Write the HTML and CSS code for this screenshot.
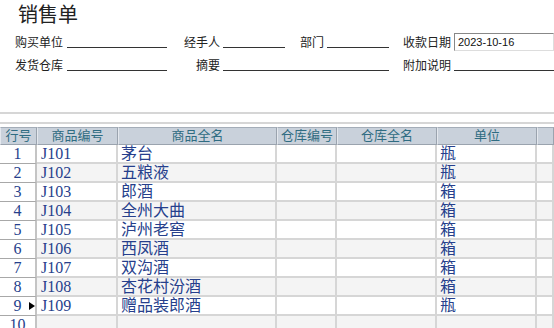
FILE: index.html
```html
<!DOCTYPE html>
<html lang="zh-cn">
<head>
  <meta charset="UTF-8">
  <title>销售单</title>
  <link rel="stylesheet" href="styles.css">
</head>
<body>
  <div id="sheet">
    <div class="title">销售单</div>
    <div class="form">
      <span class="lbl">购买单位</span><span class="line"></span>
      <span class="lbl right">经手人</span><span class="line"></span>
      <span class="lbl right">部门</span><span class="line"></span>
      <span class="lbl wide">收款日期</span><span class="date">2023-10-16</span>

      <span class="lbl">发货仓库</span><span class="line"></span>
      <span class="lbl right">摘要</span><span class="line span3"></span>
      <span class="lbl wide">附加说明</span><span class="line"></span>
    </div>
    <div class="sep"></div>
    <div class="grid" id="grid">
      <div class="row head">
        <div class="cell">行号</div>
        <div class="cell">商品编号</div>
        <div class="cell">商品全名</div>
        <div class="cell">仓库编号</div>
        <div class="cell">仓库全名</div>
        <div class="cell">单位</div>
        <div class="cell"></div>
      </div>
    </div>
  </div>
  <script>
    var items = [
      ['J101', '茅台', '瓶'],
      ['J102', '五粮液', '瓶'],
      ['J103', '郎酒', '箱'],
      ['J104', '全州大曲', '箱'],
      ['J105', '泸州老窖', '箱'],
      ['J106', '西凤酒', '箱'],
      ['J107', '双沟酒', '箱'],
      ['J108', '杏花村汾酒', '箱'],
      ['J109', '赠品装郎酒', '瓶'],
      ['', '', '']
    ];
    var grid = document.getElementById('grid');
    items.forEach(function (it, i) {
      var row = document.createElement('div');
      row.className = 'row' + (i % 2 ? ' even' : '');
      var mark = i === 8 ? '<span class="mark"></span>' : '';
      row.innerHTML =
        '<div class="cell no">' + (i + 1) + mark + '</div>' +
        '<div class="cell code">' + it[0] + '</div>' +
        '<div class="cell">' + it[1] + '</div>' +
        '<div class="cell"></div>' +
        '<div class="cell"></div>' +
        '<div class="cell">' + it[2] + '</div>' +
        '<div class="cell"></div>';
      grid.appendChild(row);
    });
  </script>
</body>
</html>
```

FILE: styles.css
```css
body {
  margin: 0;
  background: #fff;
  font-family: "Liberation Sans", "Noto Sans CJK SC", sans-serif;
  color: #222;
  overflow: hidden;
}
#sheet {
  width: 554px;
}
.title {
  height: 30px;
  line-height: 30px;
  padding-left: 18px;
  font-size: 20px;
  color: #222;
}
.form {
  display: grid;
  grid-template-columns: 52px 100px 56px 62px 42px 62px 65px 100px;
  grid-auto-rows: 23px;
  padding-left: 15px;
  font-size: 12px;
  align-items: center;
}
.lbl {
  white-space: nowrap;
}
.lbl.right {
  text-align: right;
  padding-right: 3px;
}
.lbl.wide {
  padding-left: 14px;
}
.line {
  height: 13px;
  border-bottom: 1px solid #333;
  align-self: end;
  margin-bottom: 5px;
}
.line.span3 {
  grid-column: span 3;
}
.date {
  height: 18px;
  box-sizing: border-box;
  border: 1px solid #888;
  border-right-color: #ddd;
  border-bottom-color: #ddd;
  font-size: 11px;
  line-height: 16px;
  padding-left: 3px;
  color: #111;
}
.sep {
  height: 2px;
  background: #d6d6d6;
  margin-top: 36px;
}
.grid {
  margin-top: 8px;
  border-top: 2px solid #d6d6d6;
  padding-top: 3px;
}
.row {
  display: grid;
  grid-template-columns: 37px 81px 159px 60px 100px 100px 17px;
  height: 19px;
}
.row.even .cell {
  background: #f4f4f4;
}
.cell {
  box-sizing: border-box;
  border-right: 2px solid #d6d6d6;
  border-bottom: 2px solid #d6d6d6;
  font-size: 16px;
  line-height: 17px;
  padding-left: 3px;
  color: #263f8c;
  white-space: nowrap;
  overflow: hidden;
}
.cell.code {
  padding-left: 4px;
  font-family: "Liberation Serif", "Noto Sans CJK SC", serif;
}
.row.even .cell.no,
.cell.no {
  position: relative;
  background: #fff;
  text-align: center;
  padding-left: 0;
  font-family: "Liberation Serif", serif;
  border-bottom: 1px solid #a8a8a8;
  border-right: 2px solid #c4c4c4;
}
.mark {
  position: absolute;
  left: 29px;
  top: 5px;
  border-left: 6px solid #000;
  border-top: 4px solid transparent;
  border-bottom: 4px solid transparent;
}
.row.head {
  height: 18px;
}
.row.head .cell {
  background: #c9d1db;
  border-top: 1px solid #a4adb8;
  border-left: 1px solid #e4e8ee;
  border-right: 1px solid #9aa3ae;
  border-bottom: 1px solid #9aa3ae;
  font-size: 13px;
  line-height: 16px;
  text-align: center;
  padding-left: 0;
  color: #2f6c82;
}
```
